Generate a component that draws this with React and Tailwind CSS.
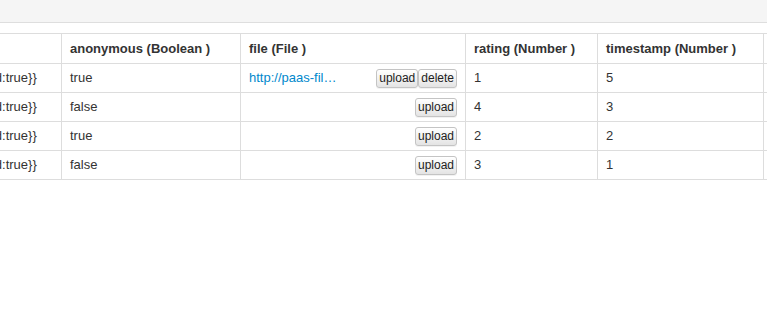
import React from 'react';

const rows = [
  { anon: 'true', file: 'http://paas-files.example.com/feedback/attachment.png', rating: '1', ts: '5' },
  { anon: 'false', file: null, rating: '4', ts: '3' },
  { anon: 'true', file: null, rating: '2', ts: '2' },
  { anon: 'false', file: null, rating: '3', ts: '1' },
];

const SmallButton = ({ children }) => (
  <button className="h-[19px] px-[2px] text-[12px] leading-[16px] text-[#222] border border-[#c4c4c4] rounded-[3px] bg-gradient-to-b from-white to-[#e4e4e4] shadow-[0_1px_0_rgba(0,0,0,0.05)]">
    {children}
  </button>
);

const App = () => {
  return (
    <div className="w-[767px] h-[325px] bg-white overflow-hidden text-[13px] text-[#333]" style={{ fontFamily: '"Liberation Sans", Arial, sans-serif' }}>
      {/* top toolbar strip */}
      <div className="h-[23px] bg-[#f5f5f5] border-b border-[#dedede]" />

      <div className="mt-[10px] overflow-hidden">
        <table className="table-fixed border-collapse ml-[-59px] w-[970px]">
          <colgroup>
            <col className="w-[120px]" />
            <col className="w-[179px]" />
            <col className="w-[225px]" />
            <col className="w-[132px]" />
            <col className="w-[166px]" />
            <col className="w-[148px]" />
          </colgroup>
          <thead>
            <tr className="h-[30px]">
              <th className="border border-[#ddd] px-2 text-left font-bold"></th>
              <th className="border border-[#ddd] px-2 text-left font-bold">anonymous (Boolean )</th>
              <th className="border border-[#ddd] px-2 text-left font-bold">file (File )</th>
              <th className="border border-[#ddd] px-2 text-left font-bold">rating (Number )</th>
              <th className="border border-[#ddd] px-2 text-left font-bold">timestamp (Number )</th>
              <th className="border border-[#ddd] px-2 text-left font-bold"></th>
            </tr>
          </thead>
          <tbody>
            {rows.map((r, i) => (
              <tr key={i} className="h-[29px]">
                <td className="border border-[#ddd] px-2 whitespace-nowrap overflow-hidden">{'{required:true}}'}</td>
                <td className="border border-[#ddd] px-2">{r.anon}</td>
                <td className="border border-[#ddd] px-2">
                  <div className="flex items-center">
                    {r.file && (
                      <a href="#" className="text-[#0088cc] truncate w-[92px] block">{r.file}</a>
                    )}
                    <div className="ml-auto flex">
                      <SmallButton>upload</SmallButton>
                      {r.file && <SmallButton>delete</SmallButton>}
                    </div>
                  </div>
                </td>
                <td className="border border-[#ddd] px-2">{r.rating}</td>
                <td className="border border-[#ddd] px-2">{r.ts}</td>
                <td className="border border-[#ddd] px-2"></td>
              </tr>
            ))}
          </tbody>
        </table>
      </div>
    </div>
  );
};

export default App;
